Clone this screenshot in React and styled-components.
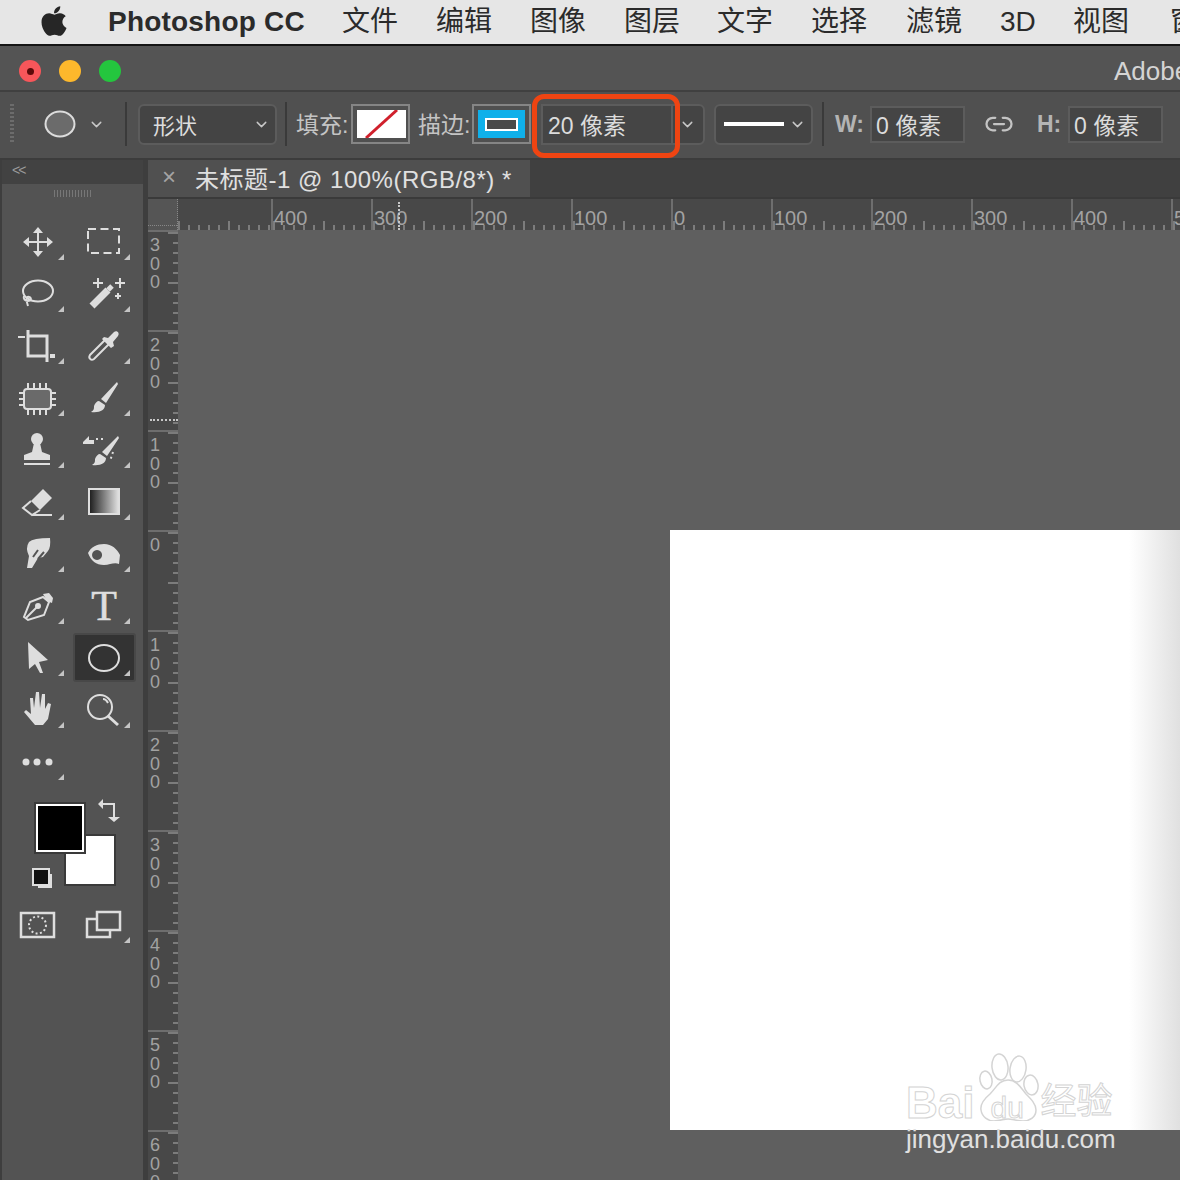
import React from 'react';
import styled, { createGlobalStyle } from 'styled-components';
import { FaApple } from 'react-icons/fa';
import { ChevronDown, Link2 } from 'lucide-react';

const cjk = '"Liberation Sans", "Noto Sans CJK SC", sans-serif';

const GlobalStyle = createGlobalStyle`
  html, body { margin: 0; padding: 0; background: #5f5f5f; }
  * { box-sizing: border-box; }
`;

const Page = styled.div`
  width: 1180px;
  height: 1180px;
  overflow: hidden;
  display: flex;
  flex-direction: column;
  font-family: ${cjk};
`;

const MenuBar = styled.div`
  height: 46px;
  flex: none;
  display: flex;
  align-items: center;
  background: #e6e6e6;
  border-bottom: 2px solid #151515;
  color: #2b2b2b;
  white-space: nowrap;
  padding-left: 39px;
  overflow: hidden;
`;

const AppleMark = styled(FaApple)`
  width: 30px;
  height: 34px;
  flex: none;
  color: #262626;
  margin-top: -3px;
`;

const AppName = styled.span`
  font-size: 28px;
  font-weight: 700;
  letter-spacing: 0.2px;
  margin-left: 39px;
  width: 234px;
  flex: none;
`;

const MenuItem = styled.span`
  font-size: 28px;
  line-height: 34px;
  margin-top: 0;
  flex: none;
  width: ${p => p.$w || 94}px;
`;

const TitleBar = styled.div`
  height: 46px;
  flex: none;
  display: flex;
  align-items: center;
  background: #545454;
  border-bottom: 2px solid #404040;
  padding: 6px 0 0 19px;
  gap: 18px;
  white-space: nowrap;
  overflow: hidden;
`;

const Light = styled.div`
  width: 22px;
  height: 22px;
  flex: none;
  border-radius: 50%;
  background: ${p => p.$color};
  display: flex;
  align-items: center;
  justify-content: center;
  &::after {
    content: '';
    display: ${p => (p.$dot ? 'block' : 'none')};
    width: 7px;
    height: 7px;
    border-radius: 50%;
    background: #5c0a0a;
  }
`;

const TitleText = styled.span`
  font-size: 26px;
  color: #d4d4d4;
  flex: none;
  margin-left: 975px;
`;

const OptionsBar = styled.div`
  height: 68px;
  flex: none;
  display: flex;
  align-items: center;
  background: #505050;
  border-bottom: 2px solid #3c3c3c;
  padding: 0 0 2px 10px;
  color: #dcdcdc;
  white-space: nowrap;
`;

const Grip = styled.div`
  width: 4px;
  height: 40px;
  flex: none;
  background: repeating-linear-gradient(to bottom, #6c6c6c 0 2px, transparent 2px 4px);
`;

const ShapePicker = styled.div`
  width: 61px;
  flex: none;
  margin-left: 30px;
  display: flex;
  align-items: center;
  justify-content: space-between;
`;

const BarDivider = styled.div`
  width: 2px;
  height: 44px;
  flex: none;
  background: #3a3a3a;
  margin-left: ${p => p.$gap}px;
`;

const Select = styled.div`
  width: ${p => p.$w}px;
  height: 41px;
  flex: none;
  margin-left: ${p => p.$gap}px;
  display: flex;
  align-items: center;
  justify-content: space-between;
  background: #444444;
  border: 2px solid #5c5c5c;
  border-radius: 6px;
  padding: 0 5px 0 13px;
  font-size: 22px;
`;

const OptionLabel = styled.span`
  width: ${p => p.$w}px;
  flex: none;
  margin-left: ${p => p.$gap}px;
  margin-top: ${p => (p.$latin ? 0 : -3)}px;
  font-size: 23px;
  font-weight: ${p => (p.$latin ? 700 : 400)};
  color: ${p => (p.$latin ? '#b4b4b4' : '#c4c4c4')};
`;

const Swatch = styled.div`
  width: 59px;
  height: 40px;
  flex: none;
  margin-left: ${p => p.$gap}px;
  border: 2px solid #858585;
  padding: 4px;
  display: flex;
`;

const SwatchFill = styled.div`
  flex: 1;
  background: ${p => p.$color};
  display: flex;
  align-items: center;
  justify-content: center;
`;

const StrokeSample = styled.div`
  width: 33px;
  height: 13px;
  background: #4a4a4a;
  border: 2px solid #fff;
`;

const StrokeSize = styled.div`
  width: 164px;
  height: 41px;
  flex: none;
  margin-left: 10px;
  position: relative;
  display: flex;
  align-items: center;
  justify-content: flex-end;
  border: 2px solid #5c5c5c;
  border-radius: 6px;
  padding-right: 7px;
  background: #444444;
`;

const StrokeValue = styled.div`
  position: absolute;
  left: -2px;
  top: -2px;
  width: 132px;
  height: 41px;
  display: flex;
  align-items: center;
  padding-left: 5px;
  background: #454545;
  border: 2px solid #5c5c5c;
  font-size: 23px;
`;

const Highlight = styled.div`
  position: absolute;
  left: -11px;
  top: -12px;
  width: 148px;
  height: 64px;
  border: 5px solid #ef4412;
  border-radius: 12px;
`;

const LinePreview = styled.div`
  width: 60px;
  height: 4px;
  background: #fff;
  margin-left: -5px;
`;

const SizeInput = styled.div`
  width: 95px;
  height: 37px;
  flex: none;
  display: flex;
  align-items: center;
  padding-left: 4px;
  background: #454545;
  border: 2px solid #5c5c5c;
  font-size: 23px;
`;

const LinkIcon = styled(Link2)`
  width: 30px;
  height: 30px;
  flex: none;
  margin-left: 19px;
  color: #c4c4c4;
`;

const Workspace = styled.div`
  flex: 1;
  display: flex;
  min-height: 0;
  background: #3e3e3e;
`;

const ToolPanel = styled.div`
  width: 141px;
  flex: none;
  margin-left: 2px;
  background: #535353;
  display: flex;
  flex-direction: column;
`;

const PanelHeader = styled.div`
  height: 24px;
  background: #424242;
  color: #9a9a9a;
  font-size: 14px;
  line-height: 20px;
  padding-left: 10px;
  letter-spacing: -2px;
`;

const PanelGrip = styled.div`
  height: 32px;
  display: flex;
  justify-content: center;
  padding-top: 6px;
  &::before {
    content: '';
    width: 38px;
    height: 7px;
    background: repeating-linear-gradient(to right, #777 0 1px, transparent 1px 3px);
  }
`;

const ToolGrid = styled.div`
  display: grid;
  grid-template-columns: 66px 66px;
  grid-auto-rows: 52px;
  padding-left: 3px;
  color: #dedede;
`;

const Tool = styled.div`
  position: relative;
  display: flex;
  align-items: center;
  justify-content: center;
  z-index: 0;
  &::before {
    content: '';
    display: ${p => (p.$active ? 'block' : 'none')};
    position: absolute;
    inset: 1px 1px 2px 2px;
    background: #333333;
    border: 2px solid #484848;
    border-radius: 3px;
    z-index: -1;
  }
  &::after {
    content: '';
    display: ${p => (p.$corner === false ? 'none' : 'block')};
    position: absolute;
    right: 7px;
    bottom: 8px;
    border-style: solid;
    border-width: 0 0 6px 6px;
    border-color: transparent transparent #c4c4c4 transparent;
  }
`;

const Icon = styled.svg.attrs({ viewBox: '0 0 44 44', fill: 'none', stroke: 'currentColor', strokeWidth: 2 })`
  width: 44px;
  height: 44px;
  display: block;
`;

const TypeGlyph = styled.span`
  font-family: "Liberation Serif", serif;
  font-size: 42px;
  line-height: 44px;
  height: 44px;
  -webkit-text-stroke: 0.6px #dedede;
`;

const ColorBlock = styled.div`
  position: relative;
  height: 105px;
  margin-top: 14px;
  color: #dedede;
`;

const ColorChip = styled.div`
  position: absolute;
  left: ${p => p.$x}px;
  top: ${p => p.$y}px;
  width: 52px;
  height: 52px;
  border: 2px solid #3a3a3a;
  background: ${p => p.$fill};
  outline: ${p => (p.$ring ? '2px solid #fff' : 'none')};
  outline-offset: -4px;
`;

const SwapIcon = styled.svg.attrs({ viewBox: '0 0 24 24', fill: 'none', stroke: 'currentColor', strokeWidth: 2 })`
  position: absolute;
  left: 94px;
  top: -3px;
  width: 24px;
  height: 24px;
`;

const DefaultIcon = styled.div`
  position: absolute;
  left: 30px;
  top: 66px;
  width: 22px;
  height: 22px;
  background: linear-gradient(#dedede, #dedede) no-repeat 6px 6px / 14px 14px;
  &::before {
    content: '';
    position: absolute;
    left: 0;
    top: 0;
    width: 14px;
    height: 14px;
    background: #111;
    border: 2px solid #dedede;
  }
`;

const ModeRow = styled.div`
  display: grid;
  grid-template-columns: 66px 66px;
  padding-left: 3px;
  margin-top: -8px;
  height: 52px;
  color: #dedede;
`;

const DocArea = styled.div`
  flex: 1;
  min-width: 0;
  margin-left: 5px;
  display: flex;
  flex-direction: column;
`;

const TabBar = styled.div`
  height: 39px;
  flex: none;
  display: flex;
  background: #404040;
  border-bottom: 2px solid #3a3a3a;
`;

const Tab = styled.div`
  width: 382px;
  display: flex;
  align-items: center;
  background: #505050;
  color: #e0e0e0;
  font-size: 24px;
  letter-spacing: 0.5px;
  white-space: nowrap;
  padding: 0 0 3px 14px;
`;

const TabClose = styled.span`
  width: 33px;
  flex: none;
  font-size: 24px;
  color: #a4a4a4;
`;

const HorizontalRuler = styled.div`
  height: 31px;
  flex: none;
  display: flex;
  position: relative;
  background: #484848;
  overflow: hidden;
`;

const RulerCorner = styled.div`
  width: 30px;
  flex: none;
  background: #555;
  border-right: 1px dotted #888;
  position: relative;
  &::after {
    content: '';
    position: absolute;
    left: 0;
    right: 0;
    bottom: 4px;
    border-top: 1px dotted #888;
  }
`;

const RulerCell = styled.div`
  width: ${p => p.$w || 100}px;
  flex: none;
  font-size: 20px;
  line-height: 24px;
  padding: 7px 0 0 1px;
  color: #a2a2a2;
  border-left: ${p => (p.$lead ? 'none' : '2px solid #6e6e6e')};
  background:
    repeating-linear-gradient(to right, #7c7c7c 0 2px, transparent 2px 50px) 0 100% / 100% 9px no-repeat,
    repeating-linear-gradient(to right, #7c7c7c 0 2px, transparent 2px 10px) 0 100% / 100% 5px no-repeat;
`;

const RulerCursor = styled.div`
  position: absolute;
  left: 250px;
  top: 3px;
  bottom: 0;
  border-left: 2px dotted #c8c8c8;
`;

const CanvasRow = styled.div`
  flex: 1;
  display: flex;
  min-height: 0;
`;

const VerticalRuler = styled.div`
  width: 30px;
  flex: none;
  position: relative;
  background: #484848;
  overflow: hidden;
`;

const VerticalCell = styled.div`
  height: 100px;
  padding: 4px 0 0 0;
  border-top: 2px solid #6e6e6e;
  background:
    repeating-linear-gradient(to bottom, #7c7c7c 0 2px, transparent 2px 50px) 100% 0 / 10px 100% no-repeat,
    repeating-linear-gradient(to bottom, #7c7c7c 0 2px, transparent 2px 10px) 100% 0 / 5px 100% no-repeat;
`;

const Digit = styled.div`
  width: 14px;
  text-align: center;
  font-size: 18px;
  line-height: 18.5px;
  color: #a2a2a2;
`;

const VerticalCursor = styled.div`
  position: absolute;
  left: 2px;
  right: 0;
  top: 189px;
  border-top: 2px dotted #c8c8c8;
`;

const Canvas = styled.div`
  flex: 1;
  min-width: 0;
  position: relative;
  background: #5f5f5f;
  padding: 300px 0 0 492px;
`;

const Doc = styled.div`
  height: 600px;
  background: linear-gradient(to right, #fff 90%, #e0e0e0 100%);
`;

const Watermark = styled.div`
  position: absolute;
  left: 728px;
  top: 823px;
  width: 214px;
`;

const MarkRow = styled.div`
  display: flex;
  align-items: flex-end;
  height: 68px;
  white-space: nowrap;
  color: #fff;
  -webkit-text-stroke: 1px #d4d4d4;
`;

const MarkLatin = styled.span`
  font-size: 44px;
  font-weight: 700;
  line-height: 54px;
  margin-bottom: -9px;
`;

const PawMark = styled.div`
  position: relative;
  width: 62px;
  height: 68px;
  flex: none;
  margin-left: 3px;
`;

const PawDu = styled.span`
  position: absolute;
  left: 13px;
  bottom: -5px;
  font-size: 30px;
  line-height: 36px;
  color: #fff;
`;

const MarkCjk = styled.span`
  font-size: 36px;
  line-height: 50px;
  margin: 0 0 -6px 1px;
`;

const MarkUrl = styled.div`
  font-size: 26px;
  line-height: 30px;
  margin-top: 3px;
  color: #e0e0e0;
  white-space: nowrap;
`;

const menus = ['文件', '编辑', '图像', '图层', '文字', '选择', '滤镜', '3D', '视图', '窗口'];
const menuWidths = [94, 94, 94, 93, 94, 95, 94, 73, 97, 94];
const topLabels = ['400', '300', '200', '100', '0', '100', '200', '300', '400', '500'];
const sideLabels = ['300', '200', '100', '0', '100', '200', '300', '400', '500', '600'];

const Chevron = () => <ChevronDown size={17} strokeWidth={2} color="#c8c8c8" />;

const tools = [
  // row 1
  <Icon><path d="M22 10v24M10 22h24" /><path fill="currentColor" stroke="none" d="M22 7l5 6H17zM22 37l-5-6h10zM7 22l6-5v10zM37 22l-6 5V17z" /></Icon>,
  <Icon><rect x="6" y="9" width="31" height="24" strokeDasharray="8 4.5" /></Icon>,
  // row 2
  <Icon><ellipse cx="22" cy="19" rx="15" ry="10.5" /><path d="M8 24c-1 3 1 5 4 5s4-3 1-4-3 3-1 9" /></Icon>,
  <Icon><path d="M10 34l16-16" strokeWidth="7" /><path d="M26 18l4-4" strokeWidth="5" /><path d="M16 6v10M11 11h10M38 6v10M33 11h10M36 21v6M33 24h6" /></Icon>,
  // row 3
  <Icon><path d="M12 6v26h19M12 12h19v26" strokeWidth="3" /><path d="M2 13h7" /><path d="M34 32h5" strokeWidth="4" /></Icon>,
  <Icon><path d="M24 15L8 31c-2 3 1 6 4 4l16-16" /><path fill="currentColor" stroke="none" d="M22 13l4 1 6-6c3-2 6 1 4 4l-5 6 1 4-3 2-9-9z" /></Icon>,
  // row 4
  <Icon><rect x="8" y="13" width="27" height="20" rx="3" fill="#6a6a6a" strokeWidth="2" /><path d="M12 7v6M18 7v6M24 7v6M30 7v6M12 33v6M18 33v6M24 33v6M30 33v6M3 17h5M3 23h5M3 29h5M35 17h5M35 23h5M35 29h5" /></Icon>,
  <Icon><path fill="currentColor" stroke="none" d="M35 6l1 2-12 19-5-4zM17 25l6 4c0 5-5 8-14 7 3-2 3-3 3-6 1-3 3-5 5-5z" /></Icon>,
  // row 5
  <Icon><circle cx="21" cy="11" r="6" fill="currentColor" stroke="none" /><path fill="currentColor" stroke="none" d="M18 15h6l2 9 8 3v5H8v-5l8-3z" /><path d="M8 36h26" /></Icon>,
  <Icon><path fill="currentColor" stroke="none" d="M36 8l1 2-12 18-5-4zM18 26l6 4c0 5-5 8-14 7 3-2 3-3 3-6 1-3 3-5 5-5zM1 14l6-6v4h5v4H1z" /><path d="M14 11h7M31 24l-3 9" strokeDasharray="2 3" /></Icon>,
  // row 6
  <Icon><path fill="currentColor" stroke="none" d="M27 9l9 9-12 12-9-9z" /><path d="M15 21l-8 7 9 7 8-5M16 35h20" /></Icon>,
  <Icon>
    <defs>
      <linearGradient id="toolGradient">
        <stop offset="0" stopColor="#1a1a1a" />
        <stop offset="1" stopColor="#e4e4e4" />
      </linearGradient>
    </defs>
    <rect x="7" y="9" width="30" height="25" fill="url(#toolGradient)" />
  </Icon>,
  // row 7
  <Icon><path fill="currentColor" stroke="none" d="M13 10Q17 6 34 6q1 9-2 13l-5 6-5 1-6 10h-5l2-12q-4-8 0-14z" /><path d="M17 25l5-7M22 27l6-7" stroke="#535353" /></Icon>,
  <Icon><path fill="currentColor" fillRule="evenodd" stroke="none" d="M6 21c3-6 9-9 16-9 8 0 13 5 16 11l-1 9c-5-2-9 1-15 1-8 0-13-4-16-12zM15 18a5 5 0 1 0 .1 0z" /></Icon>,
  // row 8
  <Icon><path d="M27 13L14 18 8 33l4 3 16-5 5-13z" /><path fill="currentColor" stroke="none" d="M27 10l6-1 4 5-1 5-5-2z" /><path d="M10 34l11-11" /><circle cx="22" cy="22" r="2" fill="currentColor" /></Icon>,
  <TypeGlyph>T</TypeGlyph>,
  // row 9
  <Icon><path fill="currentColor" stroke="none" d="M12 6l20 18-9 2 4 11-3 0-5-9-6 5z" /></Icon>,
  <Icon><ellipse cx="22" cy="22" rx="15" ry="13" /></Icon>,
  // row 10
  <Icon><path fill="currentColor" stroke="none" d="M14 10h3l1 10 2-16h3l1 16 2-14h3l0 15 3-6 3 1-3 15-5 6H19L8 24l2-2 5 4z" /></Icon>,
  <Icon><circle cx="18" cy="19" r="12" /><path d="M26 28l10 9" strokeWidth="3" /><path d="M21 11c2 0 4 2 5 4" /></Icon>,
  // row 11
  <Icon><g fill="currentColor" stroke="none"><circle cx="10" cy="22" r="3.5" /><circle cx="21" cy="22" r="3.5" /><circle cx="33" cy="22" r="3.5" /></g></Icon>,
];

const App = () => (
  <Page>
    <GlobalStyle />
    <MenuBar>
      <AppleMark />
      <AppName>Photoshop CC</AppName>
      {menus.map((m, i) => (
        <MenuItem key={i} $w={menuWidths[i]}>{m}</MenuItem>
      ))}
    </MenuBar>

    <TitleBar>
      <Light $color="#f8565a" $dot />
      <Light $color="#fdb82c" />
      <Light $color="#24c63e" />
      <TitleText>Adobe</TitleText>
    </TitleBar>

    <OptionsBar>
      <Grip />
      <ShapePicker>
        <svg width="32" height="28" viewBox="0 0 32 28">
          <ellipse cx="16" cy="14" rx="14.5" ry="12.5" fill="#6b6b6b" stroke="#dcdcdc" strokeWidth="2" />
        </svg>
        <Chevron />
      </ShapePicker>
      <BarDivider $gap={20} />
      <Select $w={139} $gap={11}>形状<Chevron /></Select>
      <BarDivider $gap={8} />
      <OptionLabel $w={50} $gap={9}>填充:</OptionLabel>
      <Swatch $gap={5}>
        <SwatchFill $color="#fff">
          <svg width="49" height="28" viewBox="0 0 49 28">
            <path d="M9 28L40 0" stroke="#d0202c" strokeWidth="3" />
          </svg>
        </SwatchFill>
      </Swatch>
      <OptionLabel $w={50} $gap={8}>描边:</OptionLabel>
      <Swatch $gap={4}>
        <SwatchFill $color="#0fb0ea"><StrokeSample /></SwatchFill>
      </Swatch>
      <StrokeSize>
        <Chevron />
        <StrokeValue>20 像素</StrokeValue>
        <Highlight />
      </StrokeSize>
      <Select $w={99} $gap={9}><LinePreview /><Chevron /></Select>
      <BarDivider $gap={9} />
      <OptionLabel $w={35} $gap={11} $latin>W:</OptionLabel>
      <SizeInput>0 像素</SizeInput>
      <LinkIcon strokeWidth={1.8} />
      <OptionLabel $w={31} $gap={23} $latin>H:</OptionLabel>
      <SizeInput>0 像素</SizeInput>
    </OptionsBar>

    <Workspace>
      <ToolPanel>
        <PanelHeader>{'<<'}</PanelHeader>
        <PanelGrip />
        <ToolGrid>
          {tools.map((icon, i) => (
            <Tool key={i} $active={i === 17}>{icon}</Tool>
          ))}
        </ToolGrid>
        <ColorBlock>
          <ColorChip $x={62} $y={32} $fill="#fff" />
          <ColorChip $x={32} $y={0} $fill="#000" $ring />
          <SwapIcon>
            <path d="M5 5h13v13" />
            <path fill="currentColor" stroke="none" d="M2 5l5-5v10zM18 23l-6-5h12z" />
          </SwapIcon>
          <DefaultIcon />
        </ColorBlock>
        <ModeRow>
          <Tool $corner={false}>
            <Icon>
              <rect x="5" y="10" width="33" height="24" strokeWidth="2.5" />
              <circle cx="21.5" cy="22" r="8.5" strokeDasharray="2 2.4" />
            </Icon>
          </Tool>
          <Tool>
            <Icon>
              <rect x="5" y="16" width="23" height="18" strokeWidth="2.5" />
              <rect x="15" y="9" width="23" height="18" fill="#535353" strokeWidth="2.5" />
            </Icon>
          </Tool>
        </ModeRow>
      </ToolPanel>

      <DocArea>
        <TabBar>
          <Tab>
            <TabClose>×</TabClose>
            未标题-1 @ 100%(RGB/8*) *
          </Tab>
        </TabBar>
        <HorizontalRuler>
          <RulerCorner />
          <RulerCell $w={93} $lead />
          {topLabels.map((t, i) => (
            <RulerCell key={i}>{t}</RulerCell>
          ))}
          <RulerCursor />
        </HorizontalRuler>
        <CanvasRow>
          <VerticalRuler>
            {sideLabels.map((t, i) => (
              <VerticalCell key={i}>
                {t.split('').map((d, j) => <Digit key={j}>{d}</Digit>)}
              </VerticalCell>
            ))}
            <VerticalCursor />
          </VerticalRuler>
          <Canvas>
            <Doc />
            <Watermark>
              <MarkRow>
                <MarkLatin>Bai</MarkLatin>
                <PawMark>
                  <svg width="62" height="68" viewBox="0 0 62 68" fill="#fff" stroke="#d4d4d4" strokeWidth="1.5">
                    <ellipse cx="9" cy="27" rx="6" ry="9" transform="rotate(-12 9 27)" />
                    <ellipse cx="23" cy="14" rx="8" ry="13" transform="rotate(-6 23 14)" />
                    <ellipse cx="41" cy="16" rx="8" ry="13" transform="rotate(8 41 16)" />
                    <ellipse cx="54" cy="32" rx="7" ry="10" transform="rotate(-10 54 32)" />
                    <path d="M31 27c-9 0-12 8-18 14-6 5-10 10-9 16 1 7 7 11 13 11 6 0 10-2 14-2s9 2 15 2c7 0 13-4 13-11 0-6-5-11-10-16-5-6-9-14-18-14z" />
                  </svg>
                  <PawDu>du</PawDu>
                </PawMark>
                <MarkCjk>经验</MarkCjk>
              </MarkRow>
              <MarkUrl>jingyan.baidu.com</MarkUrl>
            </Watermark>
          </Canvas>
        </CanvasRow>
      </DocArea>
    </Workspace>
  </Page>
);

export default App;
